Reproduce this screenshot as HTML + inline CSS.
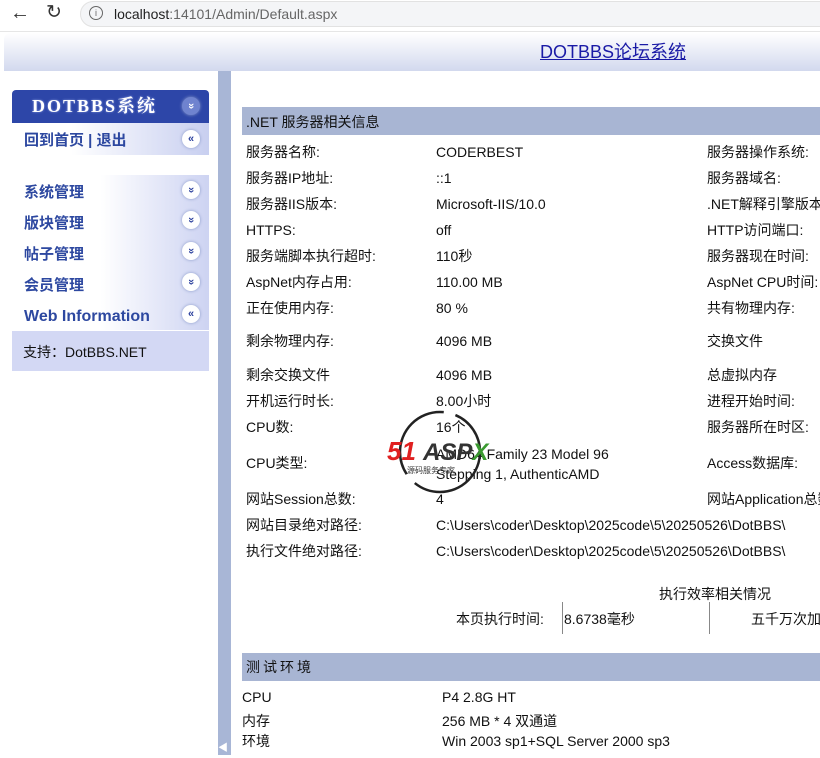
<!DOCTYPE html>
<html><head><meta charset="utf-8"><style>
*{margin:0;padding:0;box-sizing:border-box}
body{width:820px;height:755px;overflow:hidden;background:#fff;font-family:"Liberation Sans","Noto Sans CJK SC",sans-serif;font-size:14px;color:#111;position:relative}
.a{position:absolute;white-space:nowrap;line-height:18px}
.bar{position:absolute;left:0;top:0;width:820px;height:32px;background:#fff;border-bottom:1px solid #e6e6e6}
.url{position:absolute;left:80px;top:1px;width:760px;height:26px;border-radius:13px;background:#f4f5f7;border:1px solid #e2e2e2}
.hdr{position:absolute;left:4px;top:33px;width:816px;height:38px;background:linear-gradient(#fff,#d2d9ee);border-radius:6px 0 0 0}
.div{position:absolute;left:218px;top:71px;width:13px;height:684px;background:#a8b6d6}
.sec{position:absolute;left:242px;width:578px;background:#a8b5d3;height:28px}
.side{position:absolute;left:12px;width:197px}
.ic{position:absolute;width:18px;height:18px;border-radius:50%;background:#fff;box-shadow:0 0 3px #8898c8;color:#2a3f9c;font-size:11px;font-weight:bold;text-align:center;line-height:18px}
.mn{font-weight:bold;color:#2d48a0;font-size:15px}
</style></head><body>
<div class="bar"><div class="url"></div>
<span class="a" style="left:10px;top:4px;font-size:20px;color:#333">←</span>
<span class="a" style="left:46px;top:4px;font-size:19px;color:#333">↻</span>
<span class="a" style="left:89px;top:6px;width:14px;height:14px;border:1px solid #666;border-radius:50%;font-size:9px;text-align:center;line-height:12px;color:#666">i</span>
<span class="a" style="left:114px;top:5px;font-size:14px;color:#222">localhost<span style="color:#666">:14101/Admin/Default.aspx</span></span>
</div>
<div class="hdr"></div>
<a class="a" style="left:540px;top:43px;font-size:18px;color:#1a1aa6;text-decoration:underline">DOTBBS论坛系统</a>
<div class="div"></div>
<span class="a" style="left:218px;top:740px;color:#fff;font-size:10px">◀</span>

<div class="side" style="top:90px;height:33px;background:#2d46a8;border-radius:4px 4px 0 0"></div>
<span class="a" style="left:32px;top:97px;color:#fff;font-weight:bold;font-size:18px;letter-spacing:2px;font-family:'Liberation Serif','Noto Serif CJK SC',serif;text-shadow:0 0 2px #8ea0e0">DOTBBS系统</span>
<div class="ic" style="left:182px;top:97px;background:#6f83cf;color:#fff;transform:rotate(90deg)">»</div>
<div class="side" style="top:123px;height:32px;background:linear-gradient(90deg,#fff 30%,#c8cff0)"></div>
<span class="a mn" style="left:24px;top:132px">回到首页 | 退出</span>
<div class="ic" style="left:182px;top:130px">«</div>

<div class="side" style="top:175px;height:155px;background:linear-gradient(90deg,#fff 45%,#cdd3f2 100%)"></div>
<span class="a mn" style="left:24px;top:184px">系统管理</span><div class="ic" style="left:182px;top:181px;transform:rotate(90deg)">»</div>
<span class="a mn" style="left:24px;top:215px">版块管理</span><div class="ic" style="left:182px;top:211px;transform:rotate(90deg)">»</div>
<span class="a mn" style="left:24px;top:246px">帖子管理</span><div class="ic" style="left:182px;top:242px;transform:rotate(90deg)">»</div>
<span class="a mn" style="left:24px;top:277px">会员管理</span><div class="ic" style="left:182px;top:273px;transform:rotate(90deg)">»</div>
<span class="a mn" style="left:24px;top:308px;font-size:16px">Web Information</span><div class="ic" style="left:182px;top:305px">«</div>
<div class="side" style="top:331px;height:40px;background:#d3d8f4"></div>
<span class="a" style="left:23px;top:343px;font-size:14px">支持：DotBBS.NET</span>

<div class="sec" style="top:107px"></div>
<span class="a" style="left:246px;top:113px">.NET 服务器相关信息</span>

<span class="a" style="left:246px;top:143px">服务器名称:</span><span class="a" style="left:436px;top:143px">CODERBEST</span><span class="a" style="left:707px;top:143px">服务器操作系统:</span>
<span class="a" style="left:246px;top:169px">服务器IP地址:</span><span class="a" style="left:436px;top:169px">::1</span><span class="a" style="left:707px;top:169px">服务器域名:</span>
<span class="a" style="left:246px;top:195px">服务器IIS版本:</span><span class="a" style="left:436px;top:195px">Microsoft-IIS/10.0</span><span class="a" style="left:707px;top:195px">.NET解释引擎版本:</span>
<span class="a" style="left:246px;top:221px">HTTPS:</span><span class="a" style="left:436px;top:221px">off</span><span class="a" style="left:707px;top:221px">HTTP访问端口:</span>
<span class="a" style="left:246px;top:247px">服务端脚本执行超时:</span><span class="a" style="left:436px;top:247px">110秒</span><span class="a" style="left:707px;top:247px">服务器现在时间:</span>
<span class="a" style="left:246px;top:273px">AspNet内存占用:</span><span class="a" style="left:436px;top:273px">110.00 MB</span><span class="a" style="left:707px;top:273px">AspNet CPU时间:</span>
<span class="a" style="left:246px;top:299px">正在使用内存:</span><span class="a" style="left:436px;top:299px">80 %</span><span class="a" style="left:707px;top:299px">共有物理内存:</span>
<span class="a" style="left:246px;top:332px">剩余物理内存:</span><span class="a" style="left:436px;top:332px">4096 MB</span><span class="a" style="left:707px;top:332px">交换文件</span>
<span class="a" style="left:246px;top:366px">剩余交换文件</span><span class="a" style="left:436px;top:366px">4096 MB</span><span class="a" style="left:707px;top:366px">总虚拟内存</span>
<span class="a" style="left:246px;top:392px">开机运行时长:</span><span class="a" style="left:436px;top:392px">8.00小时</span><span class="a" style="left:707px;top:392px">进程开始时间:</span>
<span class="a" style="left:246px;top:418px">CPU数:</span><span class="a" style="left:436px;top:418px">16个</span><span class="a" style="left:707px;top:418px">服务器所在时区:</span>
<span class="a" style="left:246px;top:454px">CPU类型:</span><span class="a" style="left:436px;top:444px;line-height:20px">AMD64 Family 23 Model 96<br>Stepping 1, AuthenticAMD</span><span class="a" style="left:707px;top:454px">Access数据库:</span>
<span class="a" style="left:246px;top:490px">网站Session总数:</span><span class="a" style="left:436px;top:490px">4</span><span class="a" style="left:707px;top:490px">网站Application总数:</span>
<span class="a" style="left:246px;top:516px">网站目录绝对路径:</span><span class="a" style="left:436px;top:516px">C:\Users\coder\Desktop\2025code\5\20250526\DotBBS\</span>
<span class="a" style="left:246px;top:542px">执行文件绝对路径:</span><span class="a" style="left:436px;top:542px">C:\Users\coder\Desktop\2025code\5\20250526\DotBBS\</span>

<svg class="a" style="left:385px;top:405px" width="130" height="90" viewBox="0 0 130 90">
<circle cx="55" cy="47" r="40" fill="none" stroke="#222" stroke-width="2.5" stroke-dasharray="90 12"/>
<text x="2" y="55" font-size="26" font-weight="bold" font-style="italic" fill="#e02020" font-family="Liberation Sans,sans-serif">51</text>
<text x="38" y="55" font-size="24" font-weight="bold" font-style="italic" fill="#333" font-family="Liberation Sans,sans-serif">ASP<tspan fill="#3a9a30">X</tspan></text>
<text x="22" y="68" font-size="8" fill="#333" font-family="Noto Sans CJK SC,sans-serif">源码服务专家</text>
</svg>

<span class="a" style="left:659px;top:585px">执行效率相关情况</span>
<div class="a" style="left:562px;top:602px;width:1px;height:32px;background:#888"></div>
<div class="a" style="left:709px;top:602px;width:1px;height:32px;background:#888"></div>
<span class="a" style="left:456px;top:610px">本页执行时间:</span><span class="a" style="left:564px;top:610px">8.6738毫秒</span><span class="a" style="left:751px;top:610px">五千万次加法</span>

<div class="sec" style="top:653px"></div>
<span class="a" style="left:246px;top:658px;letter-spacing:3px">测试环境</span>
<span class="a" style="left:242px;top:688px">CPU</span><span class="a" style="left:442px;top:688px">P4 2.8G HT</span>
<span class="a" style="left:242px;top:712px">内存</span><span class="a" style="left:442px;top:712px">256 MB * 4 双通道</span>
<span class="a" style="left:242px;top:732px">环境</span><span class="a" style="left:442px;top:732px">Win 2003 sp1+SQL Server 2000 sp3</span>
</body></html>
